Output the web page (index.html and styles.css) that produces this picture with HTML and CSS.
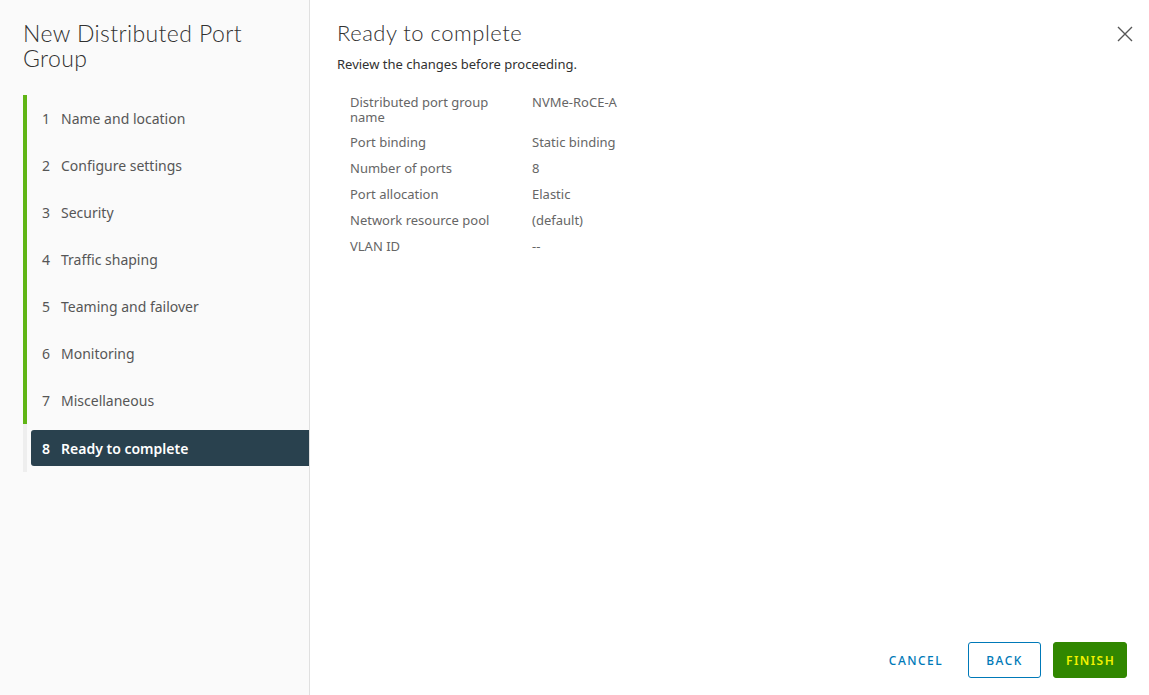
FILE: index.html
```html
<!DOCTYPE html>
<html lang="en">
<head>
<meta charset="UTF-8">
<meta name="viewport" content="width=device-width, initial-scale=1.0">
<title>New Distributed Port Group</title>
<link rel="stylesheet" href="styles.css">
</head>
<body>

<div class="wizard">
  <div class="sidebar">
    <h1 class="wizard-title">New Distributed Port Group</h1>
    <ul class="steps">
      <li class="step done"><span class="num">1</span>Name and location</li>
      <li class="step done"><span class="num">2</span>Configure settings</li>
      <li class="step done"><span class="num">3</span>Security</li>
      <li class="step done"><span class="num">4</span>Traffic shaping</li>
      <li class="step done"><span class="num">5</span>Teaming and failover</li>
      <li class="step done"><span class="num">6</span>Monitoring</li>
      <li class="step done"><span class="num">7</span>Miscellaneous</li>
      <li class="step current"><a href="#"><span class="num">8</span>Ready to complete</a></li>
    </ul>
  </div>

  <div class="content">
    <div class="header">
      <h2 class="page-title">Ready to complete</h2>
      <button class="close" aria-label="Close">
        <svg width="16" height="16" viewBox="0 0 16 16"><path d="M1 1 L15 15 M15 1 L1 15" stroke="#565656" stroke-width="1.4" fill="none"/></svg>
      </button>
    </div>
    <p class="subtitle">Review the changes before proceeding.</p>

    <table class="summary">
      <tr><td class="label">Distributed port group name</td><td>NVMe-RoCE-A</td></tr>
      <tr><td class="label">Port binding</td><td>Static binding</td></tr>
      <tr><td class="label">Number of ports</td><td>8</td></tr>
      <tr><td class="label">Port allocation</td><td>Elastic</td></tr>
      <tr><td class="label">Network resource pool</td><td>(default)</td></tr>
      <tr><td class="label">VLAN ID</td><td>--</td></tr>
    </table>

    <div class="footer">
      <button class="btn btn-link">Cancel</button>
      <button class="btn btn-outline">Back</button>
      <button class="btn btn-success">Finish</button>
    </div>
  </div>
</div>

</body>
</html>
```

FILE: styles.css
```css
/* Page base */
html, body {
  margin: 0;
  height: 100%;
}

body {
  font-family: "Noto Sans", Lato, sans-serif;
  color: #565656;
  background: #fff;
}

.wizard {
  display: flex;
  height: 695px;
}

/* Left column with the steps */
.sidebar {
  width: 310px;
  flex-shrink: 0;
  background-color: #fafafa;
  border-right: 1px solid #e0e0e0;
  padding: 21px 0 0 23px;
  box-sizing: border-box;
}

.wizard-title {
  margin: 0 0 24px 0;
  font-family: Lato, sans-serif;
  font-size: 23px;
  font-weight: 300;
  letter-spacing: 0.4px;
  line-height: 25px;
  color: #313131;
  padding-right: 30px;
}

.steps {
  list-style: none;
  margin: 0;
  padding: 0;
}

.step {
  height: 47px;
  font-size: 14px;
  display: flex;
  align-items: center;
  border-left: 4px solid #eeeeee;
  color: #565656;
}

.step.done {
  border-left-color: #60b515;
  padding-left: 15px;
}

.step .num {
  width: 19px;
  display: inline-block;
}

.step.current {
  height: 48px;
}

.step.current a {
  display: flex;
  align-items: center;
  flex: 1;
  height: 36px;
  margin-left: 4px;
  padding-left: 11px;
  background-color: #29414e;
  color: #fff;
  font-weight: 600;
  text-decoration: none;
  border-radius: 3px 0 0 3px;
}

/* Right column */
.content {
  flex: 1;
  display: flex;
  flex-direction: column;
  padding: 20px 22px 17px 27px;
  box-sizing: border-box;
}

.header {
  display: flex;
  justify-content: space-between;
  align-items: center;
}

.page-title {
  margin: 0;
  font-family: Lato, sans-serif;
  font-size: 22px;
  font-weight: 300;
  letter-spacing: 0.5px;
  color: #313131;
  line-height: 26px;
}

.close {
  background: none;
  border: 0;
  padding: 0;
  margin: 4px -6px 0 0;
  cursor: pointer;
}

.subtitle {
  margin: 10px 0 22px 0;
  font-size: 13px;
  line-height: 17px;
  color: #313131;
}

.summary {
  border-collapse: collapse;
  font-size: 13px;
  margin-left: 13px;
}

.summary td {
  padding: 0 0 11px 0;
  line-height: 15px;
  vertical-align: top;
  color: #666;
}

.summary tr:first-child td {
  padding-bottom: 10px;
}

.summary td.label {
  width: 160px;
  padding-right: 22px;
}

.footer {
  margin-top: auto;
  display: flex;
  justify-content: flex-end;
  gap: 12px;
}

.btn {
  height: 36px;
  padding: 0 12px;
  font-family: "Noto Sans", Lato, sans-serif;
  font-size: 12px;
  font-weight: 600;
  letter-spacing: 0.12em;
  text-transform: uppercase;
  border-radius: 3px;
  cursor: pointer;
}

.btn-link {
  background: none;
  border: 1px solid transparent;
  color: #0079b8;
  font-weight: 500;
  min-width: 72px;
}

.btn-outline {
  background: #fff;
  border: 1px solid #0079b8;
  color: #0079b8;
  font-weight: 500;
  width: 73px;
}

.btn-success {
  background: #318700;
  border: 1px solid #318700;
  color: #f2f200;
  width: 74px;
}
```
